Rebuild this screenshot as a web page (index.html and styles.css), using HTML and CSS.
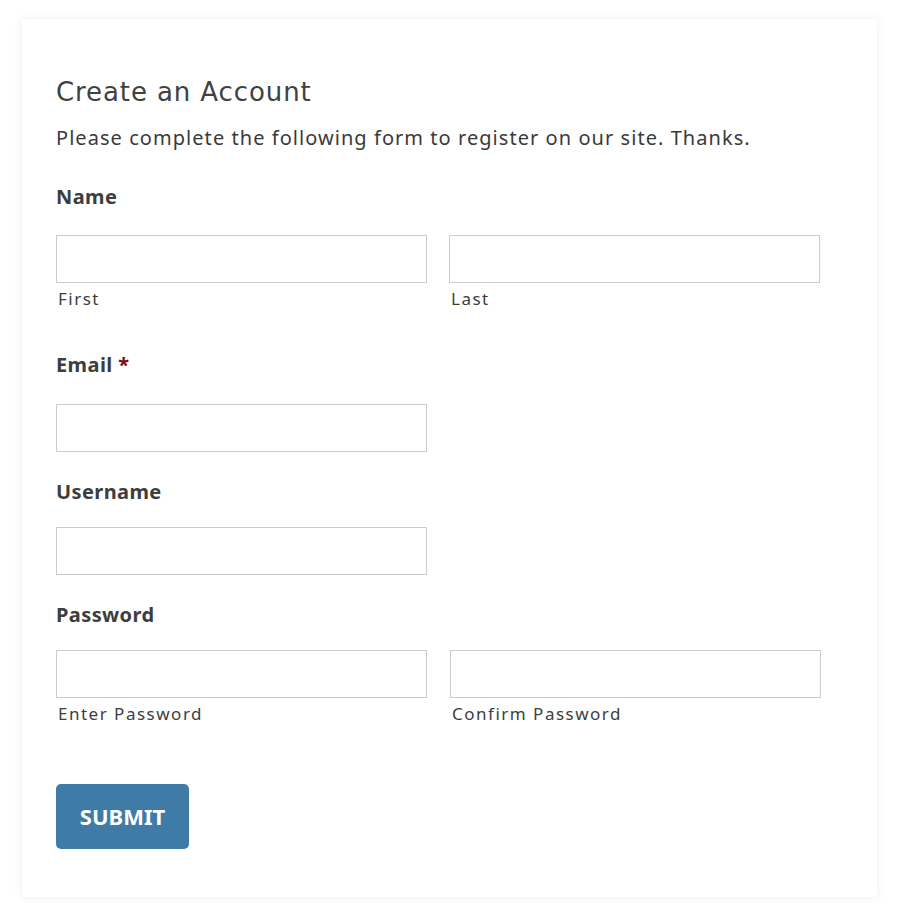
FILE: index.html
```html
<!DOCTYPE html>
<html lang="en">
<head>
<meta charset="utf-8">
<title>Create an Account</title>
<link rel="stylesheet" href="styles.css">
</head>
<body>
<main class="card">
  <h1 class="title">Create an Account</h1>
  <p class="intro">Please complete the following form to register on our site. Thanks.</p>
  <form class="form">
    <div class="field field-name">
      <div class="label">Name</div>
      <div class="row">
        <div class="sub">
          <input class="input" type="text">
          <span class="sublabel">First</span>
        </div>
        <div class="sub">
          <input class="input" type="text">
          <span class="sublabel">Last</span>
        </div>
      </div>
    </div>
    <div class="field field-email">
      <div class="label">Email <span class="req">*</span></div>
      <input class="input single" type="email">
    </div>
    <div class="field field-user">
      <div class="label">Username</div>
      <input class="input single" type="text">
    </div>
    <div class="field field-pass">
      <div class="label">Password</div>
      <div class="row row-pass">
        <div class="sub">
          <input class="input" type="password">
          <span class="sublabel">Enter Password</span>
        </div>
        <div class="sub">
          <input class="input" type="password">
          <span class="sublabel">Confirm Password</span>
        </div>
      </div>
    </div>
    <button class="submit" type="button">SUBMIT</button>
  </form>
</main>
</body>
</html>
```

FILE: styles.css
```css
html, body {
  margin: 0;
  padding: 0;
  background: #ffffff;
}
body {
  padding: 19px 20px 19px 22px;
  font-family: "Noto Sans", "Open Sans", sans-serif;
  color: #3d3d3d;
}
.card {
  width: 855px;
  height: 878px;
  box-sizing: border-box;
  background: #fff;
  box-shadow: 0 0 10px rgba(0, 0, 0, 0.07);
  padding: 57px 34px 0 34px;
}
.title {
  margin: 0;
  font-family: "DejaVu Sans", "Noto Sans", sans-serif;
  font-weight: 400;
  font-size: 26px;
  line-height: 32px;
  letter-spacing: 0.9px;
  color: #414141;
}
.intro {
  margin: 16px 0 0;
  font-size: 20px;
  line-height: 28px;
  letter-spacing: 1.05px;
  color: #3a3a3a;
}
.form {
  display: flex;
  flex-direction: column;
  align-items: flex-start;
}
.field {
  display: flex;
  flex-direction: column;
  width: 100%;
}
.label {
  font-size: 20px;
  font-weight: 700;
  line-height: 28px;
  letter-spacing: 0.4px;
  color: #3d3d3d;
}
.req {
  color: #7a0c0c;
}
.field-name { margin-top: 31px; }
.field-name .label { margin-bottom: 24px; }
.field-email { margin-top: 41px; }
.field-email .label { margin-bottom: 25px; }
.field-user { margin-top: 26px; }
.field-user .label { margin-bottom: 21px; }
.field-pass { margin-top: 26px; }
.field-pass .label { margin-bottom: 21px; }
.row {
  display: flex;
  gap: 22px;
}
.row-pass {
  gap: 23px;
}
.sub {
  display: flex;
  flex-direction: column;
}
.input {
  width: 371px;
  height: 48px;
  box-sizing: border-box;
  border: 1px solid #cccccc;
  border-radius: 0;
  margin: 0;
  padding: 0 10px;
  background: #fff;
  font: inherit;
}
.sublabel {
  margin-top: 5px;
  margin-left: 2px;
  font-size: 17px;
  line-height: 22px;
  letter-spacing: 1.5px;
  color: #3d3d3d;
}
.submit {
  margin-top: 59px;
  width: 133px;
  height: 65px;
  border: 0;
  border-radius: 5px;
  background: #3e7ca7;
  color: #ffffff;
  font-family: "Noto Sans", sans-serif;
  font-weight: 700;
  font-size: 22px;
  line-height: 61px;
  padding: 0;
  cursor: pointer;
}
```
